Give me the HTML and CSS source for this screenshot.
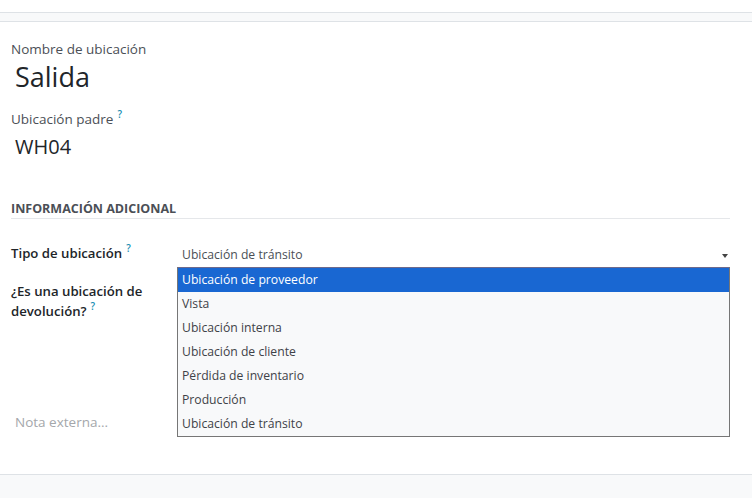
FILE: index.html
```html
<!DOCTYPE html>
<html lang="es">
<head>
<meta charset="utf-8">
<link rel="stylesheet" href="styles.css">
</head>
<body>
<div class="topbar"></div>
<main class="sheet">
  <div class="field">
    <div class="lbl">Nombre de ubicación</div>
    <div class="title">Salida</div>
  </div>
  <div class="field">
    <div class="lbl">Ubicación padre<sup class="q">?</sup></div>
    <div class="parent">WH04</div>
  </div>
  <div class="section">
    <div class="sec-title">INFORMACIÓN ADICIONAL</div>
    <div class="grid">
      <div class="glbl">Tipo de ubicación<sup class="q">?</sup></div>
      <div class="select">
        <span>Ubicación de tránsito</span>
        <span class="caret"></span>
        <ul class="menu">
          <li class="sel">Ubicación de proveedor</li>
          <li>Vista</li>
          <li>Ubicación interna</li>
          <li>Ubicación de cliente</li>
          <li>Pérdida de inventario</li>
          <li>Producción</li>
          <li>Ubicación de tránsito</li>
        </ul>
      </div>
      <div class="glbl two">¿Es una ubicación de devolución?<sup class="q">?</sup></div>
      <div></div>
    </div>
    <div class="note">Nota externa...</div>
  </div>
</main>
<div class="footer"></div>
</body>
</html>
```
FILE: styles.css
```css
html, body {
  margin: 0;
  padding: 0;
}
body {
  width: 752px;
  height: 498px;
  overflow: hidden;
  background: #fff;
  font-family: "Open Sans", "Noto Sans", sans-serif;
  color: #212529;
  display: flex;
  flex-direction: column;
}
.topbar {
  margin-top: 12px;
  height: 8px;
  background: #f8f9fa;
  border-top: 1px solid #dee2e6;
  border-bottom: 1px solid #dee2e6;
  flex: none;
}
.sheet {
  flex: 1;
  padding: 17px 22px 0 11px;
  border-bottom: 1px solid #dee2e6;
}
.field {
  margin-bottom: 14px;
}
.lbl {
  font-size: 13.5px;
  color: #4b4f56;
  line-height: 20px;
}
.q {
  display: inline-block;
  height: 10px;
  font-size: 10px;
  line-height: 10px;
  color: #1a8fb3;
  font-weight: 600;
  margin-left: 4px;
  vertical-align: 6px;
}
.title {
  font-size: 27px;
  line-height: 36px;
  padding-left: 4px;
  color: #212529;
}
.parent {
  font-size: 20px;
  line-height: 30px;
  margin-top: 3px;
  padding-left: 4px;
  color: #212529;
}
.section {
  margin-top: 40px;
}
.sec-title {
  font-size: 12.5px;
  font-weight: 700;
  color: #4b4f56;
  line-height: 14px;
  padding-bottom: 2px;
  border-bottom: 1px solid #e5e7ea;
}
.grid {
  display: grid;
  grid-template-columns: 166px 1fr;
  margin-top: 24px;
  row-gap: 16px;
}
.glbl {
  font-size: 13.2px;
  font-weight: 600;
  color: #212529;
  line-height: 20px;
}
.glbl.two {
  width: 140px;
}
.select {
  position: relative;
  font-size: 12.2px;
  color: #4b4f56;
  line-height: 20px;
  padding: 2px 0 0 5px;
  height: 20px;
}
.caret {
  position: absolute;
  right: 2px;
  top: 11px;
  width: 0;
  height: 0;
  border-left: 3.5px solid transparent;
  border-right: 3.5px solid transparent;
  border-top: 4px solid #444;
}
.menu {
  position: absolute;
  left: 0;
  right: 0;
  top: 24px;
  margin: 0;
  padding: 0;
  list-style: none;
  background: #f8f9fa;
  border: 1px solid #767676;
  border-top-color: #6e6a8c;
}
.menu li {
  height: 24px;
  line-height: 24px;
  padding-left: 4px;
  color: #3f4248;
}
.menu li.sel {
  background: #1967d2;
  color: #fff;
}
.note {
  margin-top: 91px;
  padding-left: 4px;
  font-size: 13.5px;
  color: #a4a7ab;
  line-height: 20px;
}
.footer {
  height: 23px;
  background: #f8f9fa;
  flex: none;
}
```
